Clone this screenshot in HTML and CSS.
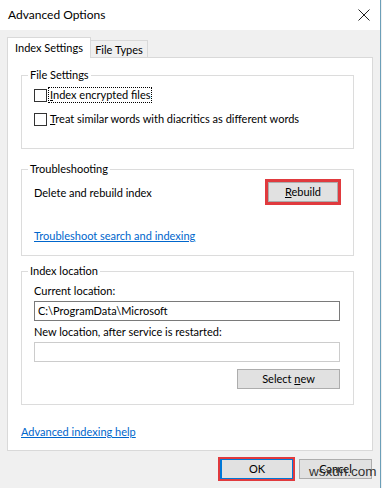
FILE: index.html
```html
<!DOCTYPE html>
<html>
<head>
<meta charset="utf-8">
<link rel="stylesheet" href="styles.css">
</head>
<body>
<div class="window">
  <div class="titlebar">
    <span class="title">Advanced Options</span>
    <svg class="close" width="12" height="12" viewBox="0 0 12 12"><path d="M0.5 0.5 L11.5 11.5 M11.5 0.5 L0.5 11.5" stroke="#222" stroke-width="1" fill="none"/></svg>
  </div>
  <div class="client">
    <div class="tabs">
      <div class="tab active">Index Settings</div>
      <div class="tab">File Types</div>
    </div>
    <div class="panel">
      <fieldset class="group g1">
        <legend>File Settings</legend>
        <div class="inner">
          <div class="check"><span class="box"></span><span class="lbl focus"><u>I</u>ndex encrypted files</span></div>
          <div class="check"><span class="box"></span><span class="lbl"><u>T</u>reat similar words with diacritics as different words</span></div>
        </div>
      </fieldset>
      <fieldset class="group g2">
        <legend>Troubleshooting</legend>
        <div class="inner">
          <div class="row">
            <span>Delete and rebuild index</span>
            <span class="hl"><span class="btn rebuild"><u>R</u>ebuild</span></span>
          </div>
          <span class="link trouble">Troubleshoot search and indexing</span>
        </div>
      </fieldset>
      <fieldset class="group g3">
        <legend>Index location</legend>
        <div class="inner">
          <div class="caption">Current location:</div>
          <div class="field">C:\ProgramData\Microsoft</div>
          <div class="caption">New location, after service is restarted:</div>
          <div class="field empty"></div>
          <div class="right"><span class="btn select">Select <u>n</u>ew</span></div>
        </div>
      </fieldset>
      <span class="link help">Advanced indexing help</span>
    </div>
    <div class="footer">
      <span class="hl ok-hl"><span class="btn ok">OK</span></span>
      <span class="btn cancel">Cancel</span>
      <span class="watermark">wsxdn.com</span>
    </div>
  </div>
</div>
</body>
</html>
```
FILE: styles.css
```css
html, body {
  margin: 0;
  padding: 0;
  background: #f0f0f0;
}
body {
  font-family: Lato, "Liberation Sans", sans-serif;
  font-size: 11px;
  color: #000;
}
.window {
  width: 380px;
  height: 488px;
  border-right: 1px solid #6b9fb8;
  background: #f0f0f0;
  display: flex;
  flex-direction: column;
}
.titlebar {
  height: 30px;
  background: #fff;
  display: flex;
  align-items: center;
  padding: 0 10px 0 8px;
  justify-content: space-between;
}
.title {
  font-size: 12px;
  margin-top: -1px;
}
.close {
  margin-top: -1px;
}
.client {
  flex: 1;
  padding: 7px 0 0 7px;
}
.tabs {
  display: flex;
  align-items: flex-end;
  height: 20px;
  position: relative;
  z-index: 1;
}
.tab {
  box-sizing: border-box;
  white-space: nowrap;
  border: 1px solid #d9d9d9;
  border-bottom: none;
  background: #f0f0f0;
  height: 17px;
  line-height: 17px;
  margin-left: -1px;
  width: 58px;
  text-align: center;
}
.tab.active {
  background: #fff;
  height: 21px;
  margin-left: 0;
  margin-bottom: -1px;
  line-height: 20px;
  width: 84px;
}
.panel {
  box-sizing: border-box;
  width: 366px;
  height: 394px;
  background: #fff;
  border: 1px solid #d9d9d9;
  padding: 9px 0 0 13px;
}
.group {
  box-sizing: border-box;
  width: 333px;
  margin: 0;
  border: 1px solid #dcdcdc;
  padding: 0;
}
.group legend {
  margin-left: 6px;
  padding: 0 2px;
  line-height: 16px;
}
.inner {
  padding: 0 12px;
}
.g1 { height: 82px; }
.g2 { height: 95px; margin-top: 12px; }
.g3 { height: 142px; margin-top: 7px; }
.g2 .inner, .g3 .inner { padding-top: 1px; }
.check {
  display: flex;
  align-items: center;
  height: 24px;
}
.box {
  box-sizing: border-box;
  width: 13px;
  height: 13px;
  border: 1px solid #333;
  background: #fff;
  margin-right: 2px;
}
.lbl {
  line-height: 14px;
  padding: 0 1px;
}
.lbl.focus {
  outline: 1px dotted #000;
}
.row {
  display: flex;
  align-items: center;
  justify-content: space-between;
  height: 26px;
  margin-top: 1px;
}
.hl {
  display: inline-flex;
  border: 3px solid #e03a3e;
}
.btn {
  box-sizing: border-box;
  display: inline-block;
  text-align: center;
  background: #e1e1e1;
  border: 1px solid #adadad;
  height: 20px;
  line-height: 18px;
}
.rebuild { width: 70px; }
.link {
  display: block;
  color: #0066cc;
  text-decoration: underline;
  line-height: 16px;
}
.trouble { margin-top: 23px; width: max-content; }
.caption {
  line-height: 16px;
  margin-top: 3px;
}
.field {
  box-sizing: border-box;
  width: 306px;
  height: 20px;
  border: 1px solid #7a7a7a;
  background: #fff;
  margin-top: 2px;
  padding-left: 3px;
  line-height: 18px;
  margin-bottom: 2px;
}
.field.empty {
  border-color: #cccccc;
}
.right {
  display: flex;
  justify-content: flex-end;
  width: 306px;
  margin-top: 7px;
}
.select { width: 103px; }
.help {
  margin-top: 19px;
  width: max-content;
}
.footer {
  display: flex;
  align-items: center;
  justify-content: flex-end;
  padding: 6px 8px 0 0;
  gap: 4px;
  position: relative;
}
.ok-hl { border-width: 2px; }
.ok {
  width: 73px;
  border: 1px solid #0078d7;
  border-left-width: 2px;
}
.cancel {
  width: 73px;
}
.watermark {
  position: absolute;
  left: 302px;
  top: 13px;
  font-family: "Liberation Sans", Arial, sans-serif;
  font-size: 13.5px;
  color: #333;
}
```
